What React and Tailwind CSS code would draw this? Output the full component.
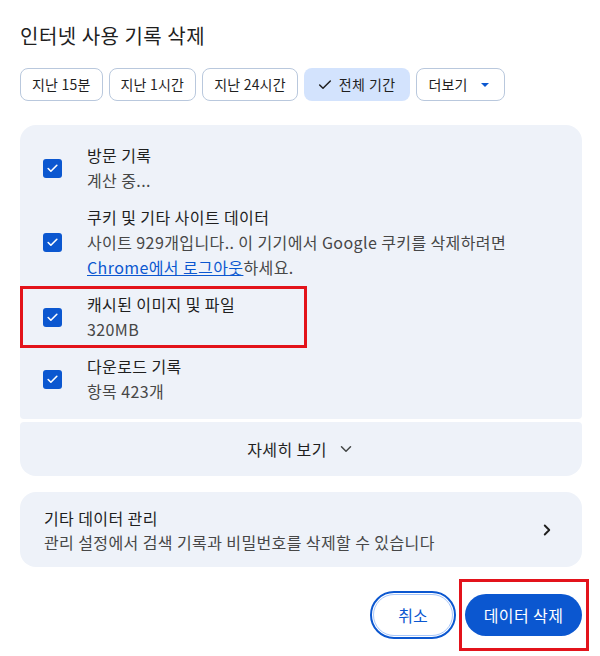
import { Check, ChevronDown, ChevronRight } from 'lucide-react';

const font = { fontFamily: '"Noto Sans CJK KR", "Noto Sans", sans-serif' };

function Chip({ children, selected }) {
    if (selected) {
        return (
            <button className="h-[33px] pl-[13px] pr-[15px] rounded-lg bg-[#d3e3fd] text-[#1f1f1f] text-[14px] tracking-[0.4px] flex items-center gap-1.5">
                <Check size={16} strokeWidth={2.2} className="text-[#1f1f1f]" />
                {children}
            </button>
        );
    }
    return (
        <button className="h-[33px] px-[11px] rounded-lg border border-[#b9c8dd] bg-white text-[#1f1f1f] text-[14px] tracking-[0.2px] flex items-center">
            {children}
        </button>
    );
}

function CheckBox() {
    return (
        <div className="w-[19px] h-[19px] rounded-[3px] bg-[#0b57d0] flex items-center justify-center shrink-0">
            <Check size={13} strokeWidth={3} className="text-white" />
        </div>
    );
}

function Row({ title, children, highlight }) {
    return (
        <div className="relative flex items-center py-[6px] pl-[23px]">
            <CheckBox />
            <div className="ml-[25px] text-[16px] leading-[25px] tracking-[0.4px]">
                <div className="text-[#1f1f1f]">{title}</div>
                <div className="text-[#474747]">{children}</div>
            </div>
            {highlight && (
                <div className="absolute left-0 top-0 bottom-0 w-[287px] border-[3px] border-[#e3131b]" />
            )}
        </div>
    );
}

export default function App() {
    return (
        <div className="w-[600px] h-[656px] bg-white pl-5 pr-[18px] pt-[22px]" style={font}>
            <h1 className="text-[20px] leading-[28px] tracking-[0.5px] text-[#1f1f1f]">인터넷 사용 기록 삭제</h1>

            {/* Time range chips */}
            <div className="flex gap-[6px] mt-[18px]">
                <Chip>지난 15분</Chip>
                <Chip>지난 1시간</Chip>
                <Chip>지난 24시간</Chip>
                <Chip selected>전체 기간</Chip>
                <Chip>
                    더보기
                    <span className="ml-[13px] mr-[4px] w-0 h-0 border-x-[4px] border-x-transparent border-t-[4px] border-t-[#0b57d0]" />
                </Chip>
            </div>

            {/* Data type list */}
            <div className="mt-[24px] bg-[#eef2f9] rounded-t-2xl rounded-b-[4px] pt-[12px] pb-[9px]">
                <Row title="방문 기록">계산 중...</Row>
                <Row title="쿠키 및 기타 사이트 데이터">
                    사이트 929개입니다.. 이 기기에서 Google 쿠키를 삭제하려면
                    <br />
                    <a className="text-[#0b57d0] underline">Chrome에서 로그아웃</a>하세요.
                </Row>
                <Row title="캐시된 이미지 및 파일" highlight>320MB</Row>
                <Row title="다운로드 기록">항목 423개</Row>
            </div>
            <div className="mt-[3px] h-[54px] bg-[#eef2f9] rounded-b-2xl rounded-t-[4px] flex items-center justify-center gap-[10px] text-[16px] tracking-[0.4px] text-[#1f1f1f]">
                <span>자세히 보기</span>
                <ChevronDown size={18} strokeWidth={2} className="text-[#444746]" />
            </div>

            {/* Other data */}
            <div className="mt-[16px] h-[75px] bg-[#eef2f9] rounded-2xl flex items-center justify-between pl-6 pr-[26px]">
                <div className="text-[16px] leading-[24px] tracking-[0.4px]">
                    <div className="text-[#1f1f1f]">기타 데이터 관리</div>
                    <div className="text-[#474747]">관리 설정에서 검색 기록과 비밀번호를 삭제할 수 있습니다</div>
                </div>
                <ChevronRight size={18} strokeWidth={2.5} className="text-[#1f1f1f]" />
            </div>

            {/* Actions */}
            <div className="mt-[27px] flex justify-end items-center gap-[12px]">
                <button className="h-[42px] w-[80px] rounded-full bg-white border border-[#a8c7fa] outline-2 outline-offset-1 outline-[#0b57d0] text-[16px] text-[#0b57d0]">
                    취소
                </button>
                <div className="relative">
                    <button className="h-[42px] w-[117px] rounded-full bg-[#0b57d0] text-[16px] tracking-[0.4px] text-white">
                        데이터 삭제
                    </button>
                    <div className="absolute -left-[6px] -right-[7px] -top-[15px] -bottom-[15px] border-[3px] border-[#e3131b]" />
                </div>
            </div>
        </div>
    );
}
